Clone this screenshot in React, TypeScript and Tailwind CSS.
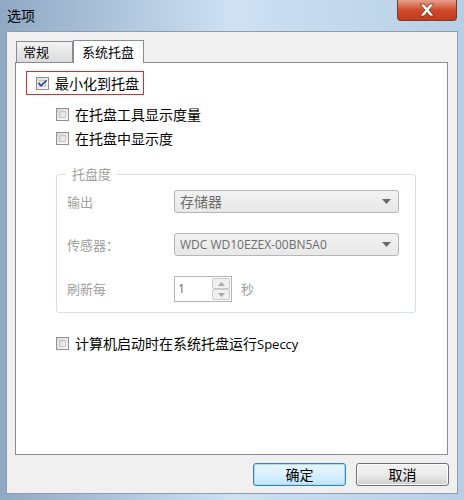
import { Check } from "lucide-react";

const font = { fontFamily: '"Noto Sans CJK SC", "Microsoft YaHei", sans-serif' };

function CheckBox({ checked = false }: { checked?: boolean }) {
  return (
    <span className="relative flex h-[13px] w-[13px] shrink-0 items-center justify-center border border-[#8e8f8f] bg-gradient-to-br from-[#dcdcdc] to-[#fafafa]">
      <span className="absolute inset-[2px] border border-[#c6c6c6] bg-gradient-to-br from-[#d8d8d8] to-[#f4f4f4]" />
      {checked && (
        <Check className="relative h-[11px] w-[11px] text-[#1d3c8a]" strokeWidth={3.5} />
      )}
    </span>
  );
}

function Combo({ value, small = false }: { value: string; small?: boolean }) {
  return (
    <div className="flex h-[23px] w-[225px] items-center justify-between rounded-[3px] border border-[#b5b5b5] bg-gradient-to-b from-[#f2f2f2] to-[#e8e8e8] pl-[5px] pr-[7px]">
      <span
        className={small ? "text-[12px] text-[#6d6d6d]" : "text-[14px] text-[#6d6d6d]"}
        style={small ? { fontFamily: '"Open Sans", sans-serif' } : undefined}
      >
        {value}
      </span>
      <svg width="9" height="5" viewBox="0 0 9 5">
        <path d="M0 0h9L4.5 5z" fill="#6a6a6a" />
      </svg>
    </div>
  );
}

export default function App() {
  return (
    <div
      className="relative h-[500px] w-[464px] overflow-hidden bg-gradient-to-r from-[#8fa9c4] via-[#cfe1f3] to-[#b7cfe6] select-none"
      style={font}
    >
      {/* title bar */}
      <div className="flex h-[31px] items-start justify-between">
        <span className="pl-[7px] pt-[5px] text-[14px] leading-[20px] text-black">选项</span>
        <div className="mr-[7px] flex h-[21px] w-[60px] items-center justify-center rounded-b-[4px] border border-t-0 border-[#7a3a2a] bg-gradient-to-b from-[#e6a08a] via-[#cf4a2c] to-[#c23a1c]">
          <svg width="18" height="14" viewBox="0 0 18 14">
            <path
              d="M2 1h4l3 3.5L12 1h4l-5 6 5 6h-4l-3-3.5L6 13H2l5-6z"
              fill="#fff"
              stroke="#6b3020"
              strokeWidth="0.8"
            />
          </svg>
        </div>
      </div>

      {/* client area */}
      <div className="relative mx-[6px] flex h-[463px] flex-col border border-[#8c9db0] bg-[#f0f0f0]">
        {/* tabs */}
        <div className="flex items-end pl-[9px] pt-[8px]">
          <div className="flex h-[21px] w-[57px] items-center border border-b-0 border-[#898c95] bg-gradient-to-b from-[#f2f2f2] to-[#dcdcdc] pl-[6px] text-[13px] text-black">
            常规
          </div>
          <div className="-mb-px z-10 flex h-[23px] w-[71px] items-center border border-b-0 border-[#898c95] bg-white pl-[8px] text-[13px] text-black">
            系统托盘
          </div>
        </div>

        {/* tab panel */}
        <div className="relative ml-[8px] h-[393px] w-[433px] border border-[#898c95] bg-white">
          <div className="ml-[10px] mt-[8px] flex h-[24px] w-[118px] items-center border border-[#e22a2a] pl-[9px]">
            <CheckBox checked />
            <span className="ml-[6px] text-[14px] leading-[18px] text-black">最小化到托盘</span>
          </div>

          <div className="ml-[40px] mt-[10px] flex items-center">
            <CheckBox />
            <span className="ml-[6px] text-[14px] leading-[18px] text-black">在托盘工具显示度量</span>
          </div>
          <div className="ml-[40px] mt-[6px] flex items-center">
            <CheckBox />
            <span className="ml-[6px] text-[14px] leading-[18px] text-black">在托盘中显示度</span>
          </div>

          {/* group box */}
          <div className="relative ml-[40px] mt-[27px] h-[139px] w-[360px] rounded-[3px] border border-[#d5dfe5]">
            <span className="absolute -top-[10px] left-[9px] bg-white px-[6px] text-[13px] leading-[18px] text-[#a0a0a0]">
              托盘度
            </span>
            <div className="flex flex-col pl-[10px] pt-[15px] text-[13px] text-[#a0a0a0]">
              <div className="flex items-center">
                <span className="w-[107px]">输出</span>
                <Combo value="存储器" />
              </div>
              <div className="mt-[20px] flex items-center">
                <span className="w-[107px]">传感器：</span>
                <Combo value="WDC WD10EZEX-00BN5A0" small />
              </div>
              <div className="mt-[20px] flex items-center">
                <span className="w-[107px]">刷新每</span>
                <div className="flex h-[26px] w-[58px] items-stretch border border-[#b5b5b5] bg-white">
                  <span
                    className="flex-1 pl-[3px] pt-[3px] text-[12px] text-[#6d6d6d]"
                    style={{ fontFamily: '"Open Sans", sans-serif' }}
                  >
                    1
                  </span>
                  <div className="my-[1px] mr-[1px] flex w-[18px] flex-col">
                    <div className="flex flex-1 items-center justify-center rounded-[2px] border border-[#c9c9c9] bg-[#f0f0f0]">
                      <svg width="7" height="4" viewBox="0 0 7 4">
                        <path d="M0 4h7L3.5 0z" fill="#a8a8a8" />
                      </svg>
                    </div>
                    <div className="flex flex-1 items-center justify-center rounded-[2px] border border-[#c9c9c9] bg-[#f0f0f0]">
                      <svg width="7" height="4" viewBox="0 0 7 4">
                        <path d="M0 0h7L3.5 4z" fill="#a8a8a8" />
                      </svg>
                    </div>
                  </div>
                </div>
                <span className="ml-[9px]">秒</span>
              </div>
            </div>
          </div>

          <div className="ml-[40px] mt-[21px] flex items-center">
            <CheckBox />
            <span className="ml-[6px] text-[14px] leading-[18px] text-black">
              计算机启动时在系统托盘运行
              <span style={{ fontFamily: '"Open Sans", sans-serif' }} className="text-[13px]">Speccy</span>
            </span>
          </div>
        </div>

        {/* buttons */}
        <div className="mt-[8px] flex justify-end gap-[10px] pr-[8px]">
          <button className="h-[23px] w-[93px] rounded-[3px] border border-[#3c7fb1] bg-gradient-to-b from-[#eaf6fd] via-[#d9f0fc] to-[#bee6fd] text-[14px] text-black shadow-[inset_0_0_0_1px_#a8dcf5]">
            确定
          </button>
          <button className="h-[23px] w-[93px] rounded-[3px] border border-[#707070] bg-gradient-to-b from-[#f2f2f2] via-[#ebebeb] to-[#cfcfcf] text-[14px] text-black shadow-[inset_0_0_0_1px_#fcfcfc]">
            取消
          </button>
        </div>
      </div>
    </div>
  );
}
